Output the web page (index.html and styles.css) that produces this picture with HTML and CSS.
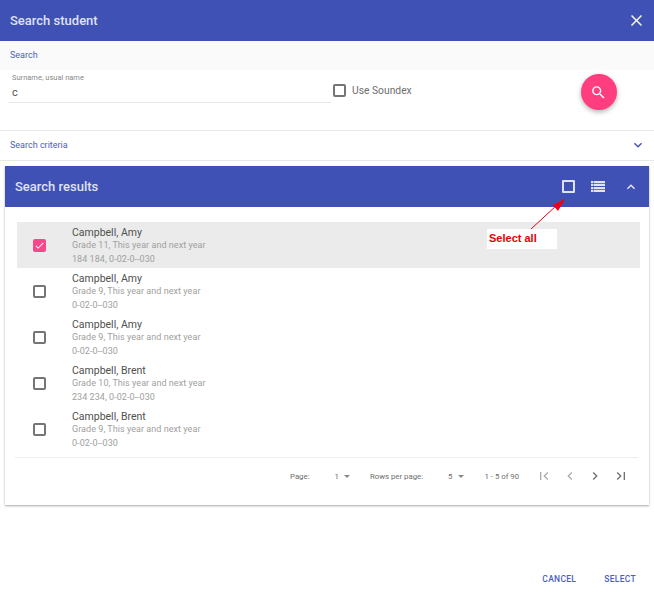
FILE: index.html
```html
<!DOCTYPE html>
<html>
<head>
  <title>Search student</title>
  <link rel="stylesheet" href="styles.css">
</head>
<body>
  <div class="dialog">
    <header class="dialog-header">
      <span class="dialog-title">Search student</span>
      <svg class="close-icon" width="19" height="19" viewBox="0 0 24 24"><path d="M19 6.41 17.59 5 12 10.59 6.41 5 5 6.41 10.59 12 5 17.59 6.41 19 12 13.41 17.59 19 19 17.59 13.41 12z"/></svg>
    </header>

    <div class="section-label search-label">Search</div>

    <div class="search-form">
      <div class="field">
        <label class="field-label">Surname, usual name</label>
        <div class="field-value">c</div>
      </div>
      <div class="soundex">
        <span class="checkbox"></span>
        <span>Use Soundex</span>
      </div>
      <button class="fab">
        <svg width="17" height="17" viewBox="0 0 24 24"><path d="M15.5 14h-.79l-.28-.27A6.47 6.47 0 0 0 16 9.5 6.5 6.5 0 1 0 9.5 16c1.61 0 3.09-.59 4.23-1.57l.27.28v.79l5 4.99L20.49 19l-4.99-5zm-6 0C7.01 14 5 11.99 5 9.5S7.01 5 9.5 5 14 7.01 14 9.5 11.99 14 9.5 14z"/></svg>
      </button>
    </div>

    <div class="section-label criteria">
      <span>Search criteria</span>
      <svg width="16" height="16" viewBox="0 0 24 24"><path d="M7.41 8.59 12 13.17l4.59-4.58L18 10l-6 6-6-6z"/></svg>
    </div>

    <section class="results">
      <div class="results-header">
        <span class="results-title">Search results</span>
        <div class="results-tools">
          <span class="select-all-box"></span>
          <svg class="list-icon" width="14" height="11" viewBox="0 0 14 11"><path d="M0 0h2.5v2.2H0zM3 0h11v2.2H3zM0 2.9h2.5v2.2H0zM3 2.9h11v2.2H3zM0 5.9h2.5v2.2H0zM3 5.9h11v2.2H3zM0 8.8h2.5V11H0zM3 8.8h11V11H3z"/></svg>
          <svg class="collapse-icon" width="16" height="16" viewBox="0 0 24 24"><path d="M7.41 15.41 12 10.83l4.59 4.58L18 14l-6-6-6 6z"/></svg>
        </div>
      </div>

      <div class="results-body">
        <div class="row selected">
          <span class="row-check">
            <span class="checkbox checked">
              <svg width="11" height="11" viewBox="0 0 24 24"><path d="M9 16.17 4.83 12l-1.42 1.41L9 19 21 7l-1.41-1.41z"/></svg>
            </span>
          </span>
          <div class="row-text">
            <div class="row-name">Campbell, Amy</div>
            <div class="row-sub">Grade 11, This year and next year</div>
            <div class="row-sub">184 184, 0-02-0--030</div>
          </div>
        </div>
        <div class="row">
          <span class="row-check"><span class="checkbox"></span></span>
          <div class="row-text">
            <div class="row-name">Campbell, Amy</div>
            <div class="row-sub">Grade 9, This year and next year</div>
            <div class="row-sub">0-02-0--030</div>
          </div>
        </div>
        <div class="row">
          <span class="row-check"><span class="checkbox"></span></span>
          <div class="row-text">
            <div class="row-name">Campbell, Amy</div>
            <div class="row-sub">Grade 9, This year and next year</div>
            <div class="row-sub">0-02-0--030</div>
          </div>
        </div>
        <div class="row">
          <span class="row-check"><span class="checkbox"></span></span>
          <div class="row-text">
            <div class="row-name">Campbell, Brent</div>
            <div class="row-sub">Grade 10, This year and next year</div>
            <div class="row-sub">234 234, 0-02-0--030</div>
          </div>
        </div>
        <div class="row">
          <span class="row-check"><span class="checkbox"></span></span>
          <div class="row-text">
            <div class="row-name">Campbell, Brent</div>
            <div class="row-sub">Grade 9, This year and next year</div>
            <div class="row-sub">0-02-0--030</div>
          </div>
        </div>

        <div class="pager">
          <span class="pager-label">Page:</span>
          <span class="pager-select page-select">1<i class="caret"></i></span>
          <span class="pager-label">Rows per page:</span>
          <span class="pager-select rows-select">5<i class="caret"></i></span>
          <span class="pager-range">1 - 5 of 90</span>
          <div class="pager-nav">
            <svg width="16" height="16" viewBox="0 0 24 24"><path d="M18.41 16.59 13.82 12l4.59-4.59L17 6l-6 6 6 6zM6 6h2v12H6z"/></svg>
            <svg width="16" height="16" viewBox="0 0 24 24"><path d="M15.41 7.41 14 6l-6 6 6 6 1.41-1.41L10.83 12z"/></svg>
            <svg class="next" width="16" height="16" viewBox="0 0 24 24"><path d="M10 6 8.59 7.41 13.17 12l-4.58 4.59L10 18l6-6z"/></svg>
            <svg class="next" width="16" height="16" viewBox="0 0 24 24"><path d="M5.59 7.41 10.18 12l-4.59 4.59L7 18l6-6-6-6zM16 6h2v12h-2z"/></svg>
          </div>
        </div>
      </div>
    </section>

    <footer class="dialog-actions">
      <span>CANCEL</span>
      <span>SELECT</span>
    </footer>
  </div>

  <!-- annotation drawn on top of the screenshot -->
  <svg class="note-arrow" width="50" height="46" viewBox="0 0 50 46">
    <path d="M1 45 27 21" stroke="#e8000b" stroke-width="1" fill="none"/>
    <path d="M35 15 23 21 28 27z" fill="#f00010"/>
  </svg>
  <div class="note-label">Select all</div>
</body>
</html>
```

FILE: styles.css
```css
* {
  box-sizing: border-box;
}
body {
  margin: 0;
  font-family: 'Roboto', sans-serif;
  background-color: white;
  color: #424242;
  overflow: hidden;
}
.dialog {
  width: 654px;
  height: 595px;
  display: flex;
  flex-direction: column;
}
.dialog-header {
  height: 41px;
  flex: none;
  display: flex;
  align-items: center;
  justify-content: space-between;
  padding: 0 8px 0 10px;
  background-color: #3f51b5;
  color: #dfe2f3;
}
.dialog-title {
  font-size: 13px;
  font-weight: 500;
}
.close-icon {
  fill: #f2f3fa;
}
.section-label {
  font-size: 9px;
  color: #4d5ebd;
  padding-left: 10px;
  padding-bottom: 2px;
  display: flex;
  align-items: center;
}
.search-label {
  height: 29px;
  flex: none;
  background-color: #fafafa;
}
.search-form {
  height: 61px;
  flex: none;
  position: relative;
  display: flex;
  align-items: flex-start;
  border-bottom: 1px solid #e8e8e8;
}
.field {
  width: 322px;
  margin-left: 9px;
  padding: 3px 0 0 3px;
  height: 33px;
  border-bottom: 1px solid #e6e6e6;
}
.field-label {
  display: block;
  font-size: 7.5px;
  line-height: 9px;
  color: #8a8a8a;
}
.field-value {
  font-size: 11px;
  line-height: 14px;
  margin-top: 4px;
  color: #555;
}
.soundex {
  display: flex;
  align-items: center;
  gap: 6px;
  margin: 13px 0 0 2px;
  font-size: 10.3px;
  color: #6e6e6e;
}
.soundex span:last-child {
  margin-top: 1px;
}
.checkbox {
  display: inline-flex;
  align-items: center;
  justify-content: center;
  width: 13px;
  height: 13px;
  border: 2px solid #757575;
  border-radius: 2px;
}
.checkbox.checked {
  background-color: #f6488a;
  border-color: #f6488a;
}
.checked svg {
  fill: white;
  flex: none;
}
.fab {
  position: absolute;
  left: 581px;
  top: 4px;
  width: 36px;
  height: 36px;
  padding: 0 2px 0 0;
  border: none;
  border-radius: 50%;
  background-color: #ff3d7f;
  box-shadow: 0 2px 5px rgba(0, 0, 0, 0.3);
  display: flex;
  align-items: center;
  justify-content: center;
}
.fab svg {
  fill: white;
}
.criteria {
  height: 30px;
  flex: none;
  justify-content: space-between;
  padding-right: 8px;
  border-bottom: 1px solid #e8e8e8;
}
.criteria svg {
  fill: #3f51b5;
}
.results {
  width: 644px;
  height: 339px;
  flex: none;
  margin: 5px 0 0 5px;
  background-color: white;
  box-shadow: 0 1px 2px rgba(0, 0, 0, 0.35);
}
.results-header {
  height: 41px;
  display: flex;
  align-items: center;
  justify-content: space-between;
  padding: 0 10px;
  background-color: #3f51b5;
  color: #dfe2f3;
}
.results-title {
  font-size: 13px;
  font-weight: 500;
}
.results-tools {
  display: flex;
  align-items: center;
}
.select-all-box {
  width: 13px;
  height: 13px;
  border: 2px solid #dfe2f3;
  border-radius: 1px;
}
.list-icon {
  fill: #dfe2f3;
  margin-left: 16px;
}
.collapse-icon {
  fill: #e8eaf6;
  margin-left: 18px;
}
.results-body {
  padding: 15px 9px 0 11px;
}
.row {
  height: 46px;
  display: flex;
  align-items: center;
  margin-left: 1px;
}
.row.selected {
  background-color: #ebebeb;
}
.row-check {
  width: 55px;
  flex: none;
  display: flex;
  justify-content: center;
  padding-right: 10px;
}
.row-text {
  padding-top: 2px;
}
.row-name {
  font-size: 10.5px;
  line-height: 13px;
  color: #505050;
}
.row-sub {
  font-size: 9px;
  line-height: 13.5px;
  color: #a0a0a0;
  letter-spacing: 0.05px;
}
.pager {
  height: 37px;
  margin: 5px 2px 0 -1px;
  border-top: 1px solid #eeeeee;
  display: flex;
  align-items: center;
  font-size: 7.8px;
  color: #6e6e6e;
  white-space: nowrap;
}
.pager-label:first-child {
  margin-left: 275px;
}
.pager-select {
  display: flex;
  align-items: center;
  gap: 5px;
}
.page-select {
  margin: 0 20px 0 25px;
}
.rows-select {
  margin: 0 21px 0 25px;
}
.caret {
  width: 0;
  height: 0;
  border-left: 3px solid transparent;
  border-right: 3px solid transparent;
  border-top: 3px solid #888;
}
.pager-nav {
  display: flex;
  gap: 9.7px;
  margin-left: 17px;
}
.pager-nav svg {
  fill: #aaaaaa;
}
.pager-nav .next {
  fill: #707070;
}
.dialog-actions {
  flex: 1;
  display: flex;
  justify-content: flex-end;
  align-items: flex-end;
  gap: 28px;
  padding: 0 18px 11px 0;
  font-size: 8.5px;
  font-weight: 500;
  letter-spacing: 0.3px;
  color: #4d5ebd;
}
.note-arrow {
  position: absolute;
  left: 530px;
  top: 184px;
}
.note-label {
  position: absolute;
  left: 487px;
  top: 229px;
  width: 70px;
  height: 20px;
  padding-left: 2px;
  background-color: white;
  font-family: 'Liberation Sans', sans-serif;
  font-size: 11px;
  font-weight: 700;
  line-height: 19px;
  color: #e60000;
}
```
